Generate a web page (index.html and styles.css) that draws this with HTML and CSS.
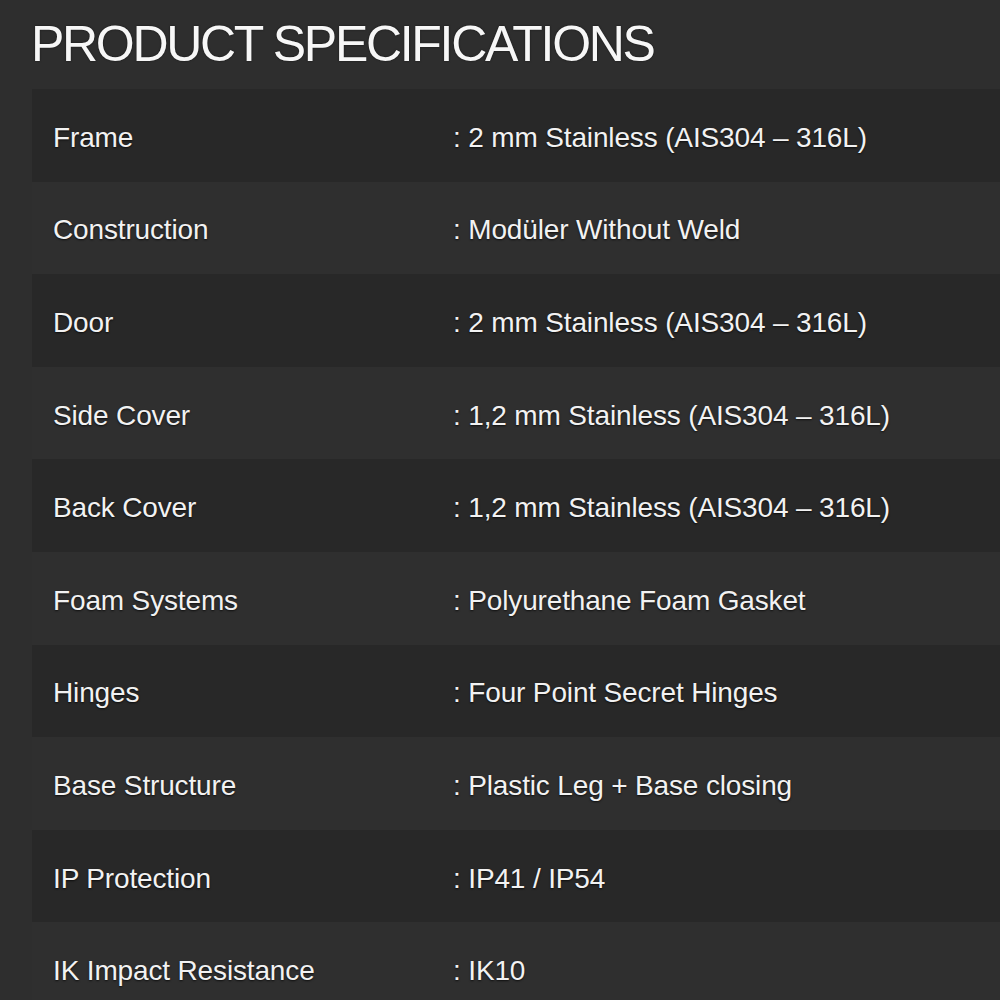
FILE: index.html
```html
<!DOCTYPE html>
<html lang="en">
<head>
<meta charset="utf-8">
<title>Product Specifications</title>
<link rel="stylesheet" href="styles.css">
</head>
<body>
<main class="page">
  <h1 class="title">PRODUCT SPECIFICATIONS</h1>
  <div class="specs">
    <div class="row"><span class="label">Frame</span><span class="value">: 2 mm Stainless (AIS304 – 316L)</span></div>
    <div class="row"><span class="label">Construction</span><span class="value">: Modüler Without Weld</span></div>
    <div class="row"><span class="label">Door</span><span class="value">: 2 mm Stainless (AIS304 – 316L)</span></div>
    <div class="row"><span class="label">Side Cover</span><span class="value">: 1,2 mm Stainless (AIS304 – 316L)</span></div>
    <div class="row"><span class="label">Back Cover</span><span class="value">: 1,2 mm Stainless (AIS304 – 316L)</span></div>
    <div class="row"><span class="label">Foam Systems</span><span class="value">: Polyurethane Foam Gasket</span></div>
    <div class="row"><span class="label">Hinges</span><span class="value">: Four Point Secret Hinges</span></div>
    <div class="row"><span class="label">Base Structure</span><span class="value">: Plastic Leg + Base closing</span></div>
    <div class="row"><span class="label">IP Protection</span><span class="value">: IP41 / IP54</span></div>
    <div class="row"><span class="label">IK Impact Resistance</span><span class="value">: IK10</span></div>
  </div>
</main>
</body>
</html>
```
FILE: styles.css
```css
html, body {
  margin: 0;
  padding: 0;
  background: #2e2e2e;
  height: 100%;
  overflow: hidden;
}
.page {
  padding: 19px 0 0 32px;
  font-family: "Liberation Sans", Arial, sans-serif;
  color: #f2f2f2;
}
.title {
  margin: 0 0 20px -1px;
  font-size: 50px;
  line-height: 50px;
  font-weight: 400;
  letter-spacing: -2.3px;
  color: #f7f7f7;
  text-shadow: 0 0 2px rgba(0,0,0,0.6);
}
.specs {
  display: flex;
  flex-direction: column;
}
.row {
  box-sizing: border-box;
  display: grid;
  grid-template-columns: 400px 1fr;
  align-items: center;
  height: 92.6px;
  padding: 5px 0 0 21px;
  font-size: 28px;
  letter-spacing: -0.15px;
  text-shadow: 0 1px 2px rgba(0,0,0,0.7);
}
.row:nth-child(odd) {
  background: #282828;
}
.row:nth-child(even) {
  background: #2f2f2f;
}
.label, .value {
  white-space: nowrap;
}
```
